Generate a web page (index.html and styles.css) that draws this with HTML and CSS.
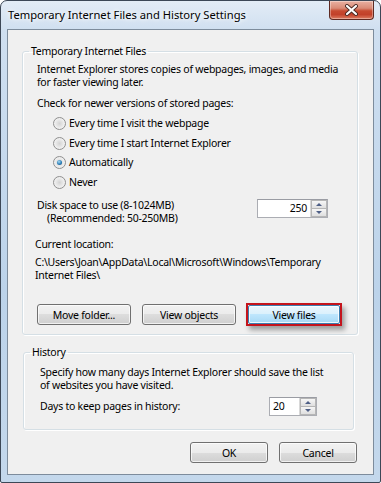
FILE: index.html
```html
<!DOCTYPE html>
<html>
<head>
    <title>Temporary Internet Files and History Settings</title>
    <meta charset="utf-8">
    <link rel="stylesheet" href="styles.css">
</head>
<body>
    <div class="window">
        <div class="titlebar">
            <span class="title">Temporary Internet Files and History Settings</span>
            <div class="close">
                <svg width="17" height="12" viewBox="0 0 17 12">
                    <path d="M4 2 L13 10 M13 2 L4 10" stroke="#4a2a24" stroke-width="4" stroke-linecap="round"/>
                    <path d="M4 2 L13 10 M13 2 L4 10" stroke="#fff" stroke-width="2.2" stroke-linecap="round"/>
                </svg>
            </div>
        </div>

        <div class="client">
            <!-- 临时文件 -->
            <fieldset class="group group-files">
                <legend>Temporary Internet Files</legend>
                <div class="group-body">
                    <p class="lines">Internet Explorer stores copies of webpages, images, and media<br>for faster viewing later.</p>
                    <p class="check-title">Check for newer versions of stored pages:</p>
                    <div class="radio-list">
                        <label class="radio-row"><span class="radio"></span>Every time I visit the webpage</label>
                        <label class="radio-row"><span class="radio"></span>Every time I start Internet Explorer</label>
                        <label class="radio-row"><span class="radio checked"></span>Automatically</label>
                        <label class="radio-row"><span class="radio"></span>Never</label>
                    </div>
                    <div class="disk-row">
                        <div class="lines">
                            Disk space to use (8-1024MB)<br>
                            <span class="indent">(Recommended: 50-250MB)</span>
                        </div>
                        <div class="spin spin-disk">
                            <span class="spin-value right">250</span>
                            <span class="spin-btns">
                                <span class="spin-btn"><span class="arrow up"></span></span>
                                <span class="spin-btn"><span class="arrow down"></span></span>
                            </span>
                        </div>
                    </div>
                    <p class="location-title">Current location:</p>
                    <p class="lines location">C:\Users\Joan\AppData\Local\Microsoft\Windows\Temporary<br>Internet Files\</p>
                    <div class="button-row">
                        <button class="btn">Move folder...</button>
                        <button class="btn">View objects</button>
                        <span class="highlight"><button class="btn focused">View files</button></span>
                    </div>
                </div>
            </fieldset>

            <!-- 历史记录 -->
            <fieldset class="group group-history">
                <legend>History</legend>
                <div class="group-body history-body">
                    <p class="lines">Specify how many days Internet Explorer should save the list<br>of websites you have visited.</p>
                    <div class="days-row">
                        <span>Days to keep pages in history:</span>
                        <div class="spin spin-days">
                            <span class="spin-value">20</span>
                            <span class="spin-btns">
                                <span class="spin-btn"><span class="arrow up"></span></span>
                                <span class="spin-btn"><span class="arrow down"></span></span>
                            </span>
                        </div>
                    </div>
                </div>
            </fieldset>

            <div class="dialog-buttons">
                <button class="btn btn-dialog">OK</button>
                <button class="btn btn-dialog">Cancel</button>
            </div>
        </div>
    </div>
</body>
</html>
```

FILE: styles.css
```css
body {
    margin: 0;
    font-family: "Noto Sans", "Open Sans", sans-serif;
    font-size: 10.5px;
    letter-spacing: -0.25px;
    line-height: 13px;
    color: #000;
    background-color: #fff;
}
p {
    margin: 0;
}
.window {
    width: 381px;
    height: 483px;
    box-sizing: border-box;
    border: 1px solid #3c4756;
    border-radius: 7px 7px 2px 2px;
    background: linear-gradient(to bottom, #e3ecf6 0, #cfdff0 30px, #bcd3ea 60%, #c4d8ec 100%);
    padding: 0 6px 7px;
    display: flex;
    flex-direction: column;
    overflow: hidden;
}
.titlebar {
    height: 28px;
    display: flex;
    justify-content: space-between;
    align-items: flex-start;
    flex-shrink: 0;
}
.title {
    font-size: 11.2px;
    letter-spacing: 0;
    line-height: 14px;
    padding: 7px 0 0 1px;
    text-shadow: 0 0 6px #fff, 0 0 4px #fff;
}
.close {
    width: 45px;
    height: 19px;
    box-sizing: border-box;
    border: 1px solid #5e2a22;
    border-top: none;
    border-radius: 0 0 4px 4px;
    background: linear-gradient(to bottom, #eab1a2 0, #d98a76 40%, #c74a30 55%, #c2412a 75%, #dd7d62 100%);
    display: flex;
    justify-content: center;
    align-items: center;
    box-shadow: inset 0 0 0 1px rgba(255,255,255,0.35);
}
.client {
    flex: 1;
    min-height: 0;
    background-color: #f0f0f0;
    border: 1px solid #7d8c9c;
    padding: 0 15px 0 14px;
    display: flex;
    flex-direction: column;
}
.group {
    border: 1px solid #d5dfe5;
    border-radius: 3px;
    padding: 0;
    min-width: 0;
    box-shadow: inset 1px 1px #fff, 1px 1px #fff;
}
.group legend {
    margin-left: 6px;
    padding: 0 2px;
    line-height: 13px;
}
.group-files {
    margin: 15px 0 0;
}
.group-history {
    margin: 11px 4px 0 1px;
}
.group-body {
    padding: 5px 4px 9px 14px;
}
.lines {
    white-space: nowrap;
}
.check-title {
    margin-top: 8px;
}
.radio-list {
    margin-top: 4px;
    padding-left: 16px;
}
.radio-row {
    display: flex;
    align-items: center;
    height: 19.5px;
}
.radio {
    width: 13px;
    height: 13px;
    box-sizing: border-box;
    border: 1px solid #8f8f8f;
    border-radius: 50%;
    background: radial-gradient(circle at 50% 50%, #d3d3d3 0, #ececec 55%, #f8f8f8 100%);
    margin-right: 3px;
    display: flex;
    align-items: center;
    justify-content: center;
}
.radio.checked::after {
    content: "";
    width: 5px;
    height: 5px;
    border-radius: 50%;
    background: radial-gradient(circle at 40% 35%, #a9dcf5 0, #2c7fb8 55%, #174c7a 100%);
}
.disk-row {
    margin-top: 7px;
    display: flex;
    justify-content: space-between;
    align-items: flex-start;
}
.indent {
    padding-left: 10px;
}
.spin {
    display: flex;
    height: 19px;
    box-sizing: border-box;
    border: 1px solid #abadb3;
    border-top-color: #9a9ca3;
    background-color: #fff;
}
.spin-disk {
    width: 71px;
    margin-right: 25px;
}
.spin-days {
    width: 48px;
    margin-right: 32px;
}
.spin-value {
    flex: 1;
    line-height: 17px;
    padding: 0 3px;
}
.spin-value.right {
    text-align: right;
}
.spin-btns {
    width: 16px;
    display: flex;
    flex-direction: column;
    border-left: 1px solid #d8d8d8;
}
.spin-btn {
    flex: 1;
    display: flex;
    align-items: center;
    justify-content: center;
    border: 1px solid #b6b6b6;
    background: linear-gradient(to bottom, #f6f6f6, #dfdfdf);
}
.spin-btn + .spin-btn {
    border-top: none;
}
.arrow {
    width: 0;
    height: 0;
    border-left: 3px solid transparent;
    border-right: 3px solid transparent;
}
.arrow.up {
    border-bottom: 3px solid #4e5f86;
}
.arrow.down {
    border-top: 3px solid #4e5f86;
}
.location-title {
    margin-top: 13px;
    margin-left: -2px;
}
.location {
    margin-top: 5px;
    margin-left: -2px;
}
.button-row {
    margin-top: 22px;
    height: 21px;
    display: flex;
    align-items: center;
    gap: 11px;
}
.btn {
    font-family: inherit;
    font-size: 10.5px;
    letter-spacing: -0.25px;
    color: #000;
    width: 94px;
    height: 21px;
    padding: 0;
    border: 1px solid #707070;
    border-radius: 3px;
    background: linear-gradient(to bottom, #f2f2f2 0, #ebebeb 50%, #dddddd 50%, #cfcfcf 100%);
    box-shadow: inset 0 0 0 1px rgba(255,255,255,0.7);
    cursor: pointer;
    flex-shrink: 0;
}
/* 红框标注 */
.highlight {
    display: flex;
    margin-left: -1px;
    border: 2px solid #c4141c;
    box-shadow: 3px 4px 5px rgba(0,0,0,0.35);
}
.btn.focused {
    width: 92px;
    height: 19px;
    border-color: #3c7fb1;
    border-radius: 2px;
    background: linear-gradient(to bottom, #eaf6fd 0, #d9f0fc 50%, #bee6fd 50%, #a7d9f5 100%);
    box-shadow: inset 0 0 0 1px rgba(255,255,255,0.8);
}
.history-body {
    padding: 7px 4px 13px 16px;
}
.days-row {
    margin-top: 5px;
    display: flex;
    justify-content: space-between;
    align-items: center;
}
.dialog-buttons {
    margin-top: 12px;
    display: flex;
    justify-content: flex-end;
    gap: 11px;
    padding-right: 1px;
}
.btn-dialog {
    width: 78px;
}
```
